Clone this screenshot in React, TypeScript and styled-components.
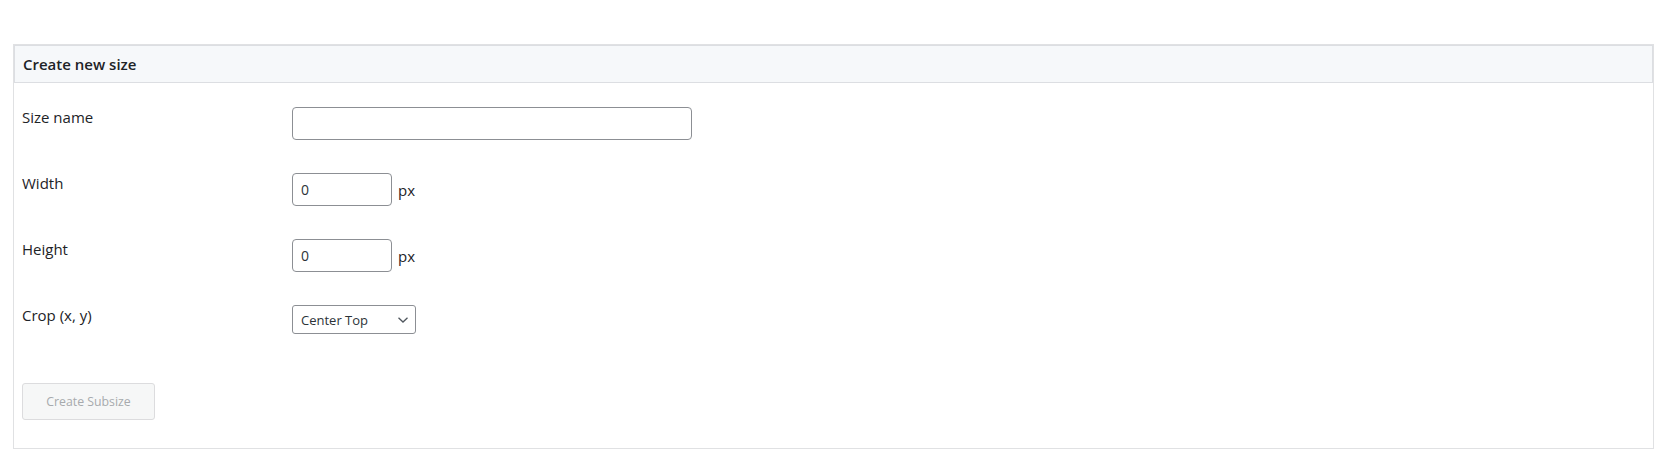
import React from "react";
import styled, { createGlobalStyle } from "styled-components";

const Global = createGlobalStyle`
  html, body { margin: 0; padding: 0; background: #ffffff; }
  body { font-family: "Open Sans", "Noto Sans", "Liberation Sans", sans-serif; color: #1d2327; }
  * { box-sizing: border-box; }
`;

const Page = styled.div`
  padding: 44px 15px 28px 13px;
`;

const Panel = styled.section`
  border: 1px solid #e0e1e3;
  background: #ffffff;
`;

const PanelHeader = styled.h2`
  margin: 0;
  height: 38px;
  display: flex;
  align-items: center;
  padding: 0 8px;
  background: #f6f8fa;
  border: 1px solid #dcdee2;
  font-size: 15px;
  font-weight: 600;
  color: #1d2327;
`;

const PanelBody = styled.div`
  padding: 9px 8px 28px 8px;
`;

const Row = styled.div`
  display: grid;
  grid-template-columns: 270px 1fr;
  height: 66px;
`;

const Label = styled.label`
  padding-top: 16px;
  font-size: 15px;
  line-height: 1.3;
  color: #1d2327;
`;

const Field = styled.div`
  padding-top: 15px;
  display: flex;
  align-items: center;
  align-self: start;
  gap: 6px;
`;

const TextInput = styled.input<{ $w: number }>`
  width: ${(p) => p.$w}px;
  height: 33px;
  padding: 0 8px;
  border: 1px solid #8c8f94;
  border-radius: 4px;
  font-family: inherit;
  font-size: 14px;
  color: #2c3338;
  background: #fff;
  outline: none;
`;

const Unit = styled.span`
  font-size: 15px;
  color: #1d2327;
`;

const SelectWrap = styled.div`
  position: relative;
  width: 124px;
  height: 29px;
`;

const Select = styled.select`
  appearance: none;
  width: 100%;
  height: 100%;
  padding: 0 24px 0 8px;
  border: 1px solid #8c8f94;
  border-radius: 3px;
  font-family: inherit;
  font-size: 13px;
  color: #2c3338;
  background: #fff;
  outline: none;
`;

const Chevron = styled.svg`
  position: absolute;
  right: 7px;
  top: 50%;
  transform: translateY(-50%);
  pointer-events: none;
`;

const Button = styled.button`
  margin-top: 27px;
  width: 133px;
  height: 37px;
  border: 1px solid #dcdcde;
  border-radius: 3px;
  background: #f6f7f7;
  color: #a7aaad;
  font-family: inherit;
  font-size: 12.3px;
  cursor: default;
`;

export default function App() {
  return (
    <>
      <Global />
      <Page>
        <Panel>
          <PanelHeader>Create new size</PanelHeader>
          <PanelBody>
            <Row>
              <Label>Size name</Label>
              <Field>
                <TextInput $w={400} type="text" defaultValue="" />
              </Field>
            </Row>
            <Row>
              <Label>Width</Label>
              <Field>
                <TextInput $w={100} type="text" defaultValue="0" />
                <Unit>px</Unit>
              </Field>
            </Row>
            <Row>
              <Label>Height</Label>
              <Field>
                <TextInput $w={100} type="text" defaultValue="0" />
                <Unit>px</Unit>
              </Field>
            </Row>
            <Row>
              <Label>Crop (x, y)</Label>
              <Field>
                <SelectWrap>
                  <Select defaultValue="center-top">
                    <option value="center-top">Center Top</option>
                  </Select>
                  <Chevron width="12" height="8" viewBox="0 0 12 8">
                    <path d="M1.5 1.8 L6 6 L10.5 1.8" fill="none" stroke="#50575e" strokeWidth="1.3" />
                  </Chevron>
                </SelectWrap>
              </Field>
            </Row>
            <Button disabled>Create Subsize</Button>
          </PanelBody>
        </Panel>
      </Page>
    </>
  );
}
